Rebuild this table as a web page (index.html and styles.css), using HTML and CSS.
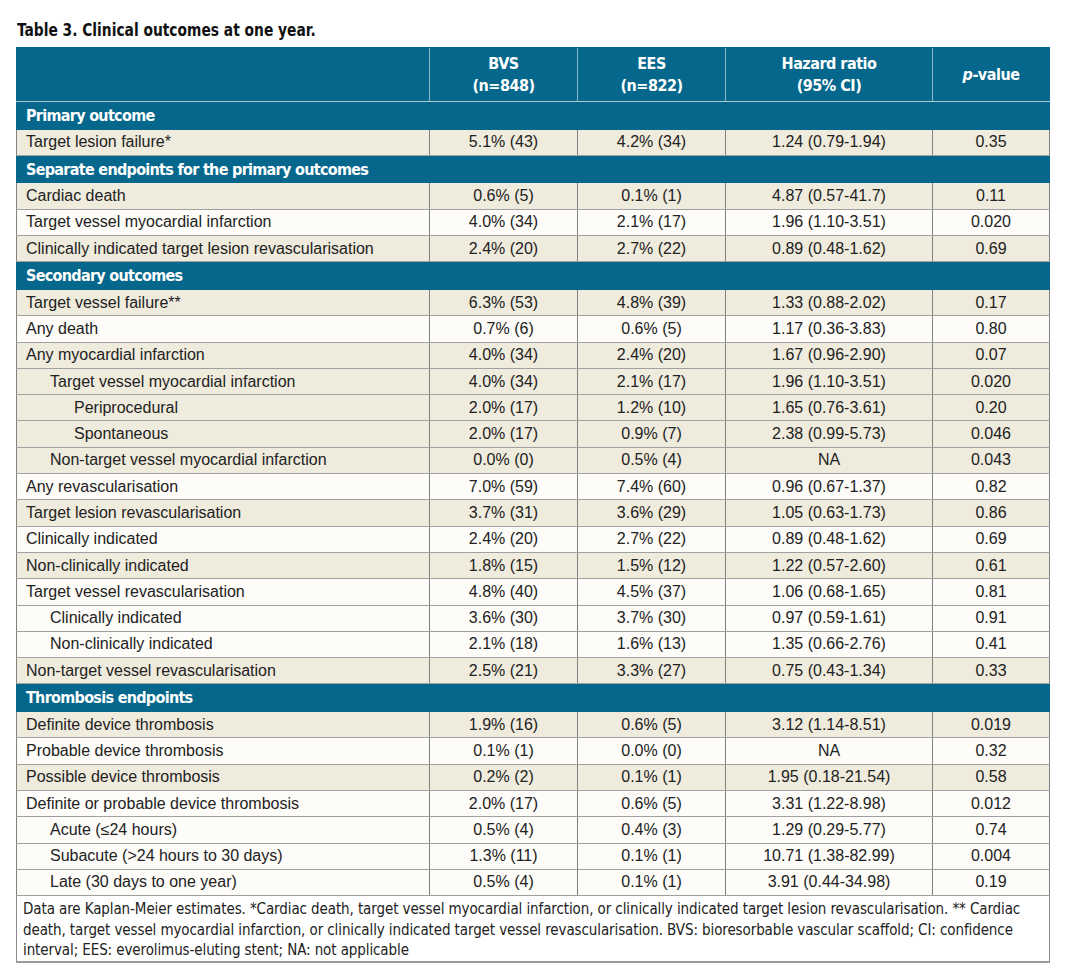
FILE: index.html
```html
<!DOCTYPE html>
<html lang="en">
<head>
<meta charset="utf-8">
<title>Table 3. Clinical outcomes at one year.</title>
<link rel="stylesheet" href="styles.css">
</head>
<body>
<div class="page">
  <h1 class="title"><span class="squeeze">Table 3. Clinical outcomes at one year.</span></h1>
  <table class="tbl">
    <colgroup>
      <col class="c-label"><col class="c-bvs"><col class="c-ees"><col class="c-hr"><col class="c-p">
    </colgroup>
    <thead>
      <tr class="head">
        <th></th>
        <th>BVS<br>(n=848)</th>
        <th>EES<br>(n=822)</th>
        <th>Hazard ratio<br>(95% CI)</th>
        <th><i>p</i>-value</th>
      </tr>
    </thead>
    <tbody>
      <tr class="sec"><td colspan="5">Primary outcome</td></tr>
      <tr class="beige"><td>Target lesion failure*</td><td>5.1% (43)</td><td>4.2% (34)</td><td>1.24 (0.79-1.94)</td><td>0.35</td></tr>
      <tr class="sec"><td colspan="5">Separate endpoints for the primary outcomes</td></tr>
      <tr class="beige"><td>Cardiac death</td><td>0.6% (5)</td><td>0.1% (1)</td><td>4.87 (0.57-41.7)</td><td>0.11</td></tr>
      <tr class="white"><td>Target vessel myocardial infarction</td><td>4.0% (34)</td><td>2.1% (17)</td><td>1.96 (1.10-3.51)</td><td>0.020</td></tr>
      <tr class="beige"><td>Clinically indicated target lesion revascularisation</td><td>2.4% (20)</td><td>2.7% (22)</td><td>0.89 (0.48-1.62)</td><td>0.69</td></tr>
      <tr class="sec"><td colspan="5">Secondary outcomes</td></tr>
      <tr class="beige"><td>Target vessel failure**</td><td>6.3% (53)</td><td>4.8% (39)</td><td>1.33 (0.88-2.02)</td><td>0.17</td></tr>
      <tr class="white"><td>Any death</td><td>0.7% (6)</td><td>0.6% (5)</td><td>1.17 (0.36-3.83)</td><td>0.80</td></tr>
      <tr class="beige"><td>Any myocardial infarction</td><td>4.0% (34)</td><td>2.4% (20)</td><td>1.67 (0.96-2.90)</td><td>0.07</td></tr>
      <tr class="beige"><td class="ind1">Target vessel myocardial infarction</td><td>4.0% (34)</td><td>2.1% (17)</td><td>1.96 (1.10-3.51)</td><td>0.020</td></tr>
      <tr class="beige"><td class="ind2">Periprocedural</td><td>2.0% (17)</td><td>1.2% (10)</td><td>1.65 (0.76-3.61)</td><td>0.20</td></tr>
      <tr class="beige"><td class="ind2">Spontaneous</td><td>2.0% (17)</td><td>0.9% (7)</td><td>2.38 (0.99-5.73)</td><td>0.046</td></tr>
      <tr class="beige"><td class="ind1">Non-target vessel myocardial infarction</td><td>0.0% (0)</td><td>0.5% (4)</td><td>NA</td><td>0.043</td></tr>
      <tr class="white"><td>Any revascularisation</td><td>7.0% (59)</td><td>7.4% (60)</td><td>0.96 (0.67-1.37)</td><td>0.82</td></tr>
      <tr class="beige"><td>Target lesion revascularisation</td><td>3.7% (31)</td><td>3.6% (29)</td><td>1.05 (0.63-1.73)</td><td>0.86</td></tr>
      <tr class="white"><td>Clinically indicated</td><td>2.4% (20)</td><td>2.7% (22)</td><td>0.89 (0.48-1.62)</td><td>0.69</td></tr>
      <tr class="beige"><td>Non-clinically indicated</td><td>1.8% (15)</td><td>1.5% (12)</td><td>1.22 (0.57-2.60)</td><td>0.61</td></tr>
      <tr class="white"><td>Target vessel revascularisation</td><td>4.8% (40)</td><td>4.5% (37)</td><td>1.06 (0.68-1.65)</td><td>0.81</td></tr>
      <tr class="white"><td class="ind1">Clinically indicated</td><td>3.6% (30)</td><td>3.7% (30)</td><td>0.97 (0.59-1.61)</td><td>0.91</td></tr>
      <tr class="white"><td class="ind1">Non-clinically indicated</td><td>2.1% (18)</td><td>1.6% (13)</td><td>1.35 (0.66-2.76)</td><td>0.41</td></tr>
      <tr class="beige"><td>Non-target vessel revascularisation</td><td>2.5% (21)</td><td>3.3% (27)</td><td>0.75 (0.43-1.34)</td><td>0.33</td></tr>
      <tr class="sec"><td colspan="5">Thrombosis endpoints</td></tr>
      <tr class="beige"><td>Definite device thrombosis</td><td>1.9% (16)</td><td>0.6% (5)</td><td>3.12 (1.14-8.51)</td><td>0.019</td></tr>
      <tr class="white"><td>Probable device thrombosis</td><td>0.1% (1)</td><td>0.0% (0)</td><td>NA</td><td>0.32</td></tr>
      <tr class="beige"><td>Possible device thrombosis</td><td>0.2% (2)</td><td>0.1% (1)</td><td>1.95 (0.18-21.54)</td><td>0.58</td></tr>
      <tr class="white"><td>Definite or probable device thrombosis</td><td>2.0% (17)</td><td>0.6% (5)</td><td>3.31 (1.22-8.98)</td><td>0.012</td></tr>
      <tr class="white"><td class="ind1">Acute (≤24 hours)</td><td>0.5% (4)</td><td>0.4% (3)</td><td>1.29 (0.29-5.77)</td><td>0.74</td></tr>
      <tr class="white"><td class="ind1">Subacute (&gt;24 hours to 30 days)</td><td>1.3% (11)</td><td>0.1% (1)</td><td>10.71 (1.38-82.99)</td><td>0.004</td></tr>
      <tr class="white"><td class="ind1">Late (30 days to one year)</td><td>0.5% (4)</td><td>0.1% (1)</td><td>3.91 (0.44-34.98)</td><td>0.19</td></tr>
    </tbody>
    <tfoot>
      <tr class="foot"><td colspan="5">Data are Kaplan-Meier estimates. *Cardiac death, target vessel myocardial infarction, or clinically indicated target lesion revascularisation. ** Cardiac death, target vessel myocardial infarction, or clinically indicated target vessel revascularisation. BVS: bioresorbable vascular scaffold; CI: confidence interval; EES: everolimus-eluting stent; NA: not applicable</td></tr>
    </tfoot>
  </table>
</div>
</body>
</html>
```
FILE: styles.css
```css
html, body {
  margin: 0;
  padding: 0;
  background: #ffffff;
}

.page {
  padding: 19px 0 0 16px;
  width: 1033px;
}

.title {
  margin: 0 0 7px 1px;
  font-family: "DejaVu Sans", sans-serif;
  font-stretch: condensed;
  font-weight: bold;
  font-size: 18.5px;
  line-height: 21px;
  color: #111;
  white-space: nowrap;
}

.squeeze {
  display: inline-block;
  transform: scaleX(0.83);
  transform-origin: 0 50%;
}

.tbl {
  width: 1033px;
  border-collapse: collapse;
  table-layout: fixed;
  font-family: "Liberation Sans", Arial, sans-serif;
  font-size: 16px;
  color: #222;
}

.c-label { width: 413px; }
.c-bvs { width: 148px; }
.c-ees { width: 148px; }
.c-hr { width: 207px; }
.c-p { width: 117px; }

.head th {
  background: #05678c;
  color: #fff;
  font-family: "DejaVu Sans", sans-serif;
  font-stretch: condensed;
  font-weight: bold;
  font-size: 16px;
  letter-spacing: -0.5px;
  line-height: 22px;
  height: 53px;
  padding: 0;
  text-align: center;
  vertical-align: middle;
  border-left: 1px solid #8db6c6;
  border-top: 1px solid #05678c;
  border-bottom: 1px solid #a8c9d5;
}
.head th:first-child { border-left: 1px solid #05678c; }
.head th:last-child { border-right: 1px solid #05678c; }

.sec td {
  background: #05678c;
  color: #fff;
  font-family: "DejaVu Sans", sans-serif;
  font-stretch: condensed;
  font-weight: bold;
  font-size: 16px;
  letter-spacing: -0.7px;
  height: 26.6px;
  padding: 0 0 0 9px;
  border: 1px solid #05678c;
  vertical-align: middle;
}

tbody tr.beige td,
tbody tr.white td {
  height: 25.3px;
  padding: 0;
  text-align: center;
  vertical-align: middle;
  border: 1px solid #808080;
  border-top-color: #a0a0a0;
  border-bottom-color: #a0a0a0;
  white-space: nowrap;
}

tbody tr.beige td { background: #efebdd; }
tbody tr.white td { background: #fdfcf8; }

tbody tr td:first-child {
  text-align: left;
  padding-left: 9px;
}
tbody tr td.ind1 { padding-left: 33px; }
tbody tr td.ind2 { padding-left: 57px; }

.foot td {
  background: #fff;
  font-family: "DejaVu Sans", sans-serif;
  font-stretch: condensed;
  font-size: 15px;
  letter-spacing: -0.1px;
  line-height: 20.5px;
  color: #222;
  padding: 3px 6px 0 6px;
  border: 1px solid #8a8a8a;
  border-bottom: 2px solid #9a9a9a;
}
```
